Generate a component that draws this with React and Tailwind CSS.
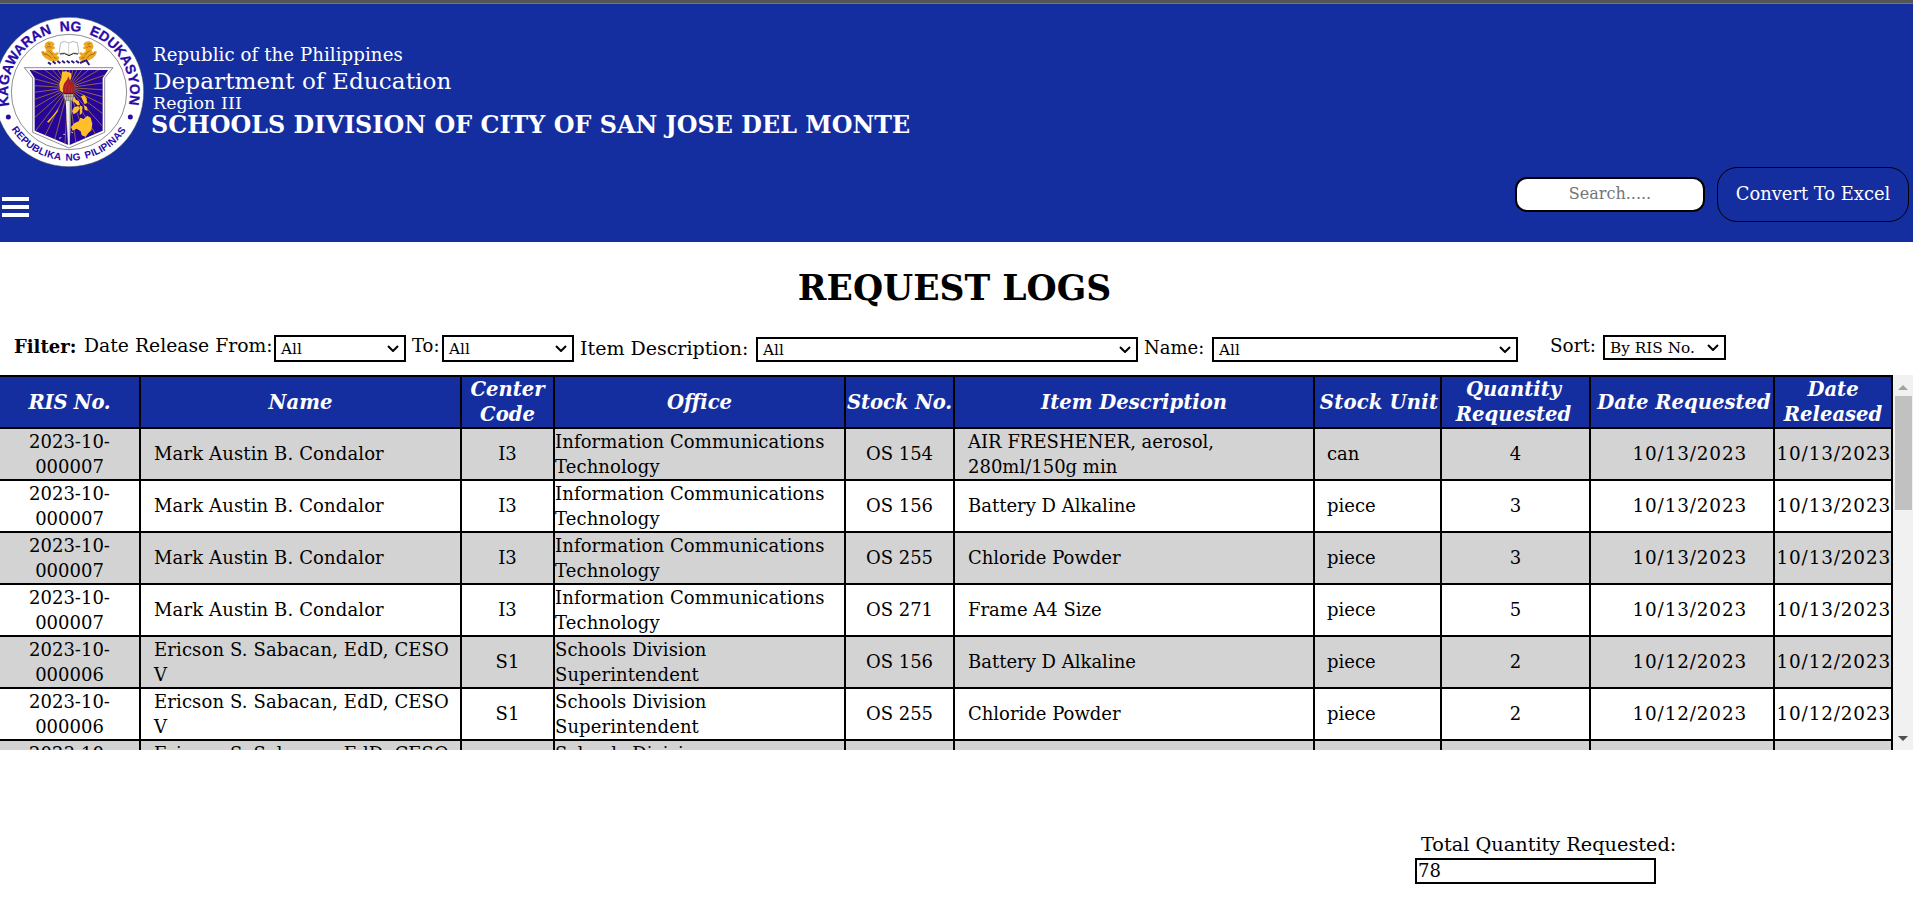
import React from "react";

const RAYS = Array.from({ length: 32 }, (_, i) => {
  const a = (i * Math.PI) / 16 + 0.06;
  return [205 + 220 * Math.cos(a), 232 + 220 * Math.sin(a)];
});

function Lion() {
  return (
    <g>
      <path
        d="M137 97 L146 93 L157 94 L164 101 L160 107 L166 113 L161 117 L157 115 L158 124 L166 129 L172 125 L176 130 L170 136 L178 140 L175 150 L166 153 L150 151 L136 144 L127 135 L123 124 L130 121 L135 127 L139 120 L133 109 Z"
        fill="#eda820"
      />
      <path
        d="M143 100 l8 2 M140 110 l10 -2 l5 6 M145 121 l8 6 l6 8 M133 131 l11 3 l10 9 M160 140 l10 5 M129 125 l5 8"
        stroke="#9a6416"
        strokeWidth="2.5"
        fill="none"
      />
    </g>
  );
}

function Seal() {
  return (
    <svg className="block h-[150px] w-[144px] shrink-0" viewBox="0 20 432 450" fill="none">
      <defs>
        <path id="seal-top" d="M28.7 286.2 A183 183 0 1 1 385.3 286.2" />
        <path id="seal-bottom" d="M34 357 A206 206 0 0 0 380 357" />
        <clipPath id="seal-inner">
          <path d="M88 178 H325 L308 203 V361 L207 405 L104 361 V203 Z" />
        </clipPath>
      </defs>
      <circle cx="207" cy="245" r="224" fill="#fff" stroke="#555" strokeWidth="1.5" />
      <circle cx="207" cy="245" r="173" stroke="#555" strokeWidth="2" />
      <text
        fill="#2a0ba6"
        stroke="#2a0ba6"
        strokeWidth="0.8"
        className="font-['Liberation_Sans',sans-serif] text-[42px] font-bold [word-spacing:14px]"
      >
        <textPath href="#seal-top" textLength="655" lengthAdjust="spacing">KAGAWARAN NG EDUKASYON</textPath>
      </text>
      <text
        fill="#2a0ba6"
        className="font-['Liberation_Sans',sans-serif] text-[30px] font-bold [word-spacing:6px]"
      >
        <textPath href="#seal-bottom" textLength="408" lengthAdjust="spacing">REPUBLIKA NG PILIPINAS</textPath>
      </text>
      <circle cx="25" cy="320" r="7.5" fill="#2a0ba6" />
      <circle cx="391" cy="320" r="7.5" fill="#2a0ba6" />

      <path
        d="M73 172 H339 L314 203 V366 L207 413 L98 366 V203 Z"
        fill="#fff"
        stroke="#555"
        strokeWidth="2"
      />
      <g clipPath="url(#seal-inner)">
        <path d="M88 178 H325 V410 H88 Z" fill="#260599" />
        {RAYS.map(([x, y]) => (
          <path key={x + "-" + y} d={`M205 232 L${x} ${y}`} stroke="#a8783f" strokeWidth="2.4" />
        ))}
        <path
          d="M186 184 L198 183 L214 189 L213 204 L207 212 L200 222 L194 238 L187 246 L180 240 L178 220 L184 204 Z"
          fill="#ffbf2b"
        />
        <path
          d="M216 262 l8 -3 l3 9 l9 3 l4 12 l-8 2 l-7 -8 l-7 -4 Z M243 258 l9 -4 l8 10 l1 14 l-7 4 l-6 -12 Z M222 291 l12 -4 l6 7 l-7 10 l-12 8 l-5 -9 Z M240 285 l8 4 l-3 22 l-6 2 Z M251 285 l10 5 l2 12 l-9 -4 Z M213 350 l10 -11 l14 -7 l4 -10 l10 4 l11 -10 l10 6 l5 18 l-3 20 l-9 8 l-8 11 l-12 -4 l-3 -12 l-12 -8 l-12 6 Z"
          fill="#ffbf2b"
        />
        <path
          d="M141 334 L152 323 L164 309 L176 293 L172 305 L159 321 L146 337 Z"
          fill="#ffbf2b"
        />
        <path d="M177 384 l7 -2 M190 372 l5 0 M214 365 l5 3" stroke="#fff" strokeWidth="2.5" />
      </g>
      <path d="M197 270 H215 L209 405 H204 Z" fill="#eee" />
      <path d="M209 272 H215 L209 402 Z" fill="#777" />
      <path d="M189 250 H221 L217 271 H195 Z" fill="#c9c3bb" stroke="#5c5148" strokeWidth="1.5" />
      <path d="M195 258 h22 M200 252 v18 M206 252 v18 M212 252 v18" stroke="#75695d" strokeWidth="2" />
      <path
        d="M192 250 L188 236 L192 220 L198 212 L202 207 L205 198 L209 208 L218 216 L224 231 L221 250 Z"
        fill="#a81c22"
      />
      <path d="M196 245 L198 228 L204 216 M206 246 L209 224 M215 245 L216 230" stroke="#d04a42" strokeWidth="1.5" />
      <path d="M192 250 H221" stroke="#5e0f13" strokeWidth="3" />

      <Lion />
      <g transform="translate(414 0) scale(-1 1)">
        <Lion />
      </g>
      <path
        d="M182 97 Q193 89 206 98 Q219 89 232 97 L237 130 Q221 123 207 134 Q193 123 177 130 Z"
        fill="#fff"
        stroke="#999"
        strokeWidth="2"
      />
      <path d="M206 98 V133" stroke="#bbb" strokeWidth="2" />
      <path d="M180 131 Q194 126 207 136 Q220 126 234 131" stroke="#222" strokeWidth="3" />
      <path
        d="M144 156 l9 6 M158 153 l9 7 M172 152 l9 7 M186 151 l9 7 M200 151 l9 7 M214 151 l9 7 M228 151 l9 7 M240 158 l16 -7 M257 148 l11 16"
        stroke="#2b1a80"
        strokeWidth="6"
      />
    </svg>
  );
}

function Chevron() {
  return (
    <svg className="h-[7px] w-[12px] shrink-0" viewBox="0 0 12 7" fill="none">
      <path d="M1 1 L6 6 L11 1" stroke="#000" strokeWidth="2" />
    </svg>
  );
}

function Select({ value, className }) {
  return (
    <button
      type="button"
      className={
        "flex shrink-0 items-center justify-between border-2 border-black bg-white pl-[5px] pr-[5px] text-left " +
        className
      }
    >
      <span className="whitespace-nowrap text-[15.3px] leading-[20px]">{value}</span>
      <Chevron />
    </button>
  );
}

const COLUMNS = [
  { label: "RIS No.", width: "w-[140px]", head: "tracking-[-0.3px]" },
  { label: "Name", width: "w-[321px]" },
  { label: "Center Code", width: "w-[93px]" },
  { label: "Office", width: "w-[291px]" },
  { label: "Stock No.", width: "w-[109px]", head: "whitespace-nowrap tracking-[-0.1px]" },
  { label: "Item Description", width: "w-[360px]" },
  { label: "Stock Unit", width: "w-[127px]", head: "whitespace-nowrap pl-[3px] tracking-[0.2px]" },
  { label: "Quantity Requested", width: "w-[149px]", head: "pr-1" },
  { label: "Date Requested", width: "w-[184px]", head: "whitespace-nowrap pl-1" },
  { label: "Date Released", width: "w-[118px]" },
];

const MARK = ["Mark Austin B. Condalor", "I3", "Information Communications Technology"];
const ERICSON = ["Ericson S. Sabacan, EdD, CESO V", "S1", "Schools Division Superintendent"];

const ROWS = [
  ["000007", MARK, "OS 154", "AIR FRESHENER, aerosol, 280ml/150g min", "can", 4, "10/13/2023"],
  ["000007", MARK, "OS 156", "Battery D Alkaline", "piece", 3, "10/13/2023"],
  ["000007", MARK, "OS 255", "Chloride Powder", "piece", 3, "10/13/2023"],
  ["000007", MARK, "OS 271", "Frame A4 Size", "piece", 5, "10/13/2023"],
  ["000006", ERICSON, "OS 156", "Battery D Alkaline", "piece", 2, "10/12/2023"],
  ["000006", ERICSON, "OS 255", "Chloride Powder", "piece", 2, "10/12/2023"],
  ["000006", ERICSON, "", "", "", "", ""],
];

const CELL = "border-2 border-black p-0 align-middle ";
const LINE = CELL + "[&>div]:pb-[2px] ";

function LogsTable() {
  return (
    <table className="w-[1892px] table-fixed border-collapse text-[18px] leading-[25px]">
      <colgroup>
        {COLUMNS.map((c) => (
          <col key={c.label} className={c.width} />
        ))}
      </colgroup>
      <thead>
        <tr className="h-[52px] bg-[#152e9f] text-[19.6px] italic text-white">
          {COLUMNS.map((c) => (
            <th key={c.label} className={CELL + "font-bold first:border-l-0 " + (c.head || "")}>
              {c.label}
            </th>
          ))}
        </tr>
      </thead>
      <tbody>
        {ROWS.map(([ris, [name, code, office], stock, item, unit, qty, date], i) => (
          <tr key={i} className="h-[52px] odd:bg-[#d3d3d3]">
            <td className={CELL + "border-l-0 px-3 text-center"}>
              2023-10-
              <br />
              {ris}
            </td>
            <td className={(name.length > 25 ? CELL : LINE) + "pl-[13px] tracking-[0.13px]"}>
              <div>{name}</div>
            </td>
            <td className={LINE + "text-center"}>
              <div>{code}</div>
            </td>
            <td className={CELL + "tracking-[0.1px]"}>{office}</td>
            <td className={LINE + "text-center"}>
              <div>{stock}</div>
            </td>
            <td className={(item.length > 25 ? CELL : LINE) + "pl-[13px] pr-20"}>
              <div>{item}</div>
            </td>
            <td className={LINE + "pl-[12px]"}>
              <div>{unit}</div>
            </td>
            <td className={LINE + "text-center"}>
              <div>{qty}</div>
            </td>
            <td className={LINE + "pr-[26px] text-right text-[18.4px] tracking-[0.85px]"}>
              <div>{date}</div>
            </td>
            <td className={LINE + "text-right text-[18.4px] tracking-[0.85px]"}>
              <div>{date}</div>
            </td>
          </tr>
        ))}
      </tbody>
    </table>
  );
}

function Scrollbar() {
  return (
    <div className="flex w-[20px] flex-col items-center bg-[#f1f1f1]">
      <div className="flex h-[21px] items-center pt-[3px]">
        <svg className="h-[5px] w-[10px]" viewBox="0 0 10 5">
          <path d="M0 5 L5 0 L10 5 Z" fill="#a3a3a3" />
        </svg>
      </div>
      <div className="ml-px h-[114px] w-[17px] bg-[#c1c1c1]" />
      <div className="mt-auto flex h-[21px] items-center pb-[3px]">
        <svg className="h-[5px] w-[10px]" viewBox="0 0 10 5">
          <path d="M0 0 L5 5 L10 0 Z" fill="#505050" />
        </svg>
      </div>
    </div>
  );
}

export default function App() {
  return (
    <div className="flex h-[913px] w-[1913px] flex-col overflow-hidden bg-white font-['DejaVu_Serif',serif] text-[18px] text-black">
      <header className="flex h-[242px] shrink-0 flex-col border-t-[3px] border-[#555] bg-[#152e9f] text-white">
        <div className="h-px shrink-0 bg-[#777]" />
        <div className="flex h-[163px] shrink-0 pt-[13px]">
          <Seal />
          <div className="flex flex-col whitespace-nowrap pl-[9px] pt-6">
            <p className="text-[18.1px] leading-[28px] tracking-[0.1px]">Republic of the Philippines</p>
            <p className="text-[23.1px] leading-[24px] tracking-[0.08px]">Department of Education</p>
            <p className="text-[17.4px] leading-[20px] tracking-[0.1px]">Region III</p>
            <p className="-ml-[2px] text-[23.8px] font-bold leading-[24px] tracking-[0.04px]">
              SCHOOLS DIVISION OF CITY OF SAN JOSE DEL MONTE
            </p>
          </div>
        </div>
        <div className="flex items-start justify-between pl-[2px] pr-1">
          <button type="button" className="mt-[30px] flex w-[27px] flex-col gap-1">
            <span className="h-1 w-full bg-white" />
            <span className="h-1 w-full bg-white" />
            <span className="h-1 w-full bg-white" />
          </button>
          <div className="flex gap-3">
            <div className="mt-[10px] flex h-[35px] w-[190px] justify-center rounded-[12px] border-2 border-black bg-white pt-[3px] text-[16px] leading-[24px] text-[#757575]">
              Search.....
            </div>
            <button
              type="button"
              className="flex h-[55px] w-[192px] items-center justify-center whitespace-nowrap rounded-[20px] border border-black text-[17.9px]"
            >
              Convert To Excel
            </button>
          </div>
        </div>
      </header>

      <h1 className="mt-[26px] h-[40px] shrink-0 pr-1 text-center text-[34.6px] font-bold leading-[40px]">REQUEST LOGS</h1>

      <div className="mt-[27px] flex h-[40px] shrink-0 items-start whitespace-nowrap pl-[14px] leading-[23px]">
        <span className="w-[70px] font-bold">Filter:</span>
        <span className="w-[190px] text-[18.8px] leading-[22px]">Date Release From:</span>
        <Select value="All" className="h-[27px] w-[132px]" />
        <span className="w-[36px] pl-[6px] leading-[22px]">To:</span>
        <Select value="All" className="h-[27px] w-[132px]" />
        <span className="w-[182px] pl-[6px] pt-[2px] text-[19px] leading-[22px]">Item Description:</span>
        <Select value="All" className="mt-[2px] h-[25px] w-[382px]" />
        <span className="w-[74px] pl-[6px] pt-[2px] leading-[22px]">Name:</span>
        <Select value="All" className="mt-[2px] h-[25px] w-[306px]" />
        <span className="w-[85px] pl-[32px] text-[18.4px] leading-[22px]">Sort:</span>
        <Select value="By RIS No." className="h-[25px] w-[123px]" />
      </div>

      <div className="flex h-[375px] shrink-0 overflow-hidden">
        <div className="w-[1893px] shrink-0 overflow-hidden">
          <LogsTable />
        </div>
        <Scrollbar />
      </div>

      <div className="ml-[1415px] mt-[81px] flex w-[300px] flex-col">
        <label className="whitespace-nowrap pl-[6px] text-[19.3px] leading-[27px]">Total Quantity Requested:</label>
        <div className="h-[26px] w-[241px] border-2 border-black pl-px leading-[21px]">78</div>
      </div>
    </div>
  );
}
